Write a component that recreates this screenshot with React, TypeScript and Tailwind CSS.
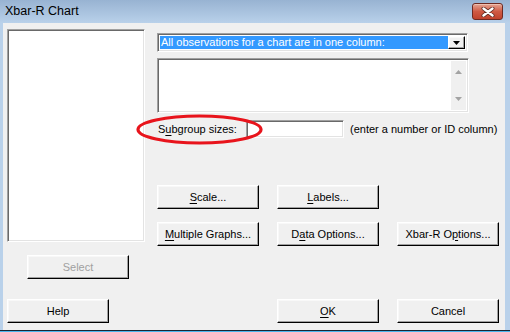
import React from "react";

const sunken =
	"border border-t-[#a0a0a0] border-l-[#a0a0a0] border-b-white border-r-white shadow-[inset_1px_1px_0_#696969,inset_-1px_-1px_0_#e3e3e3]";
const raised =
	"border border-t-white border-l-white border-b-black border-r-black shadow-[inset_-1px_-1px_0_#a0a0a0,inset_1px_1px_0_#f8f8f8] bg-[#f0f0f0]";

function Btn({
	children,
	disabled,
	className = "",
}: {
	children: React.ReactNode;
	disabled?: boolean;
	className?: string;
}) {
	return (
		<div
			className={`${raised} flex h-[24px] w-[102px] items-center justify-center text-[11px] ${
				disabled ? "text-[#a0a0a0]" : "text-black"
			} ${className}`}
		>
			{children}
		</div>
	);
}

function U({ children }: { children: React.ReactNode }) {
	return <span className="underline underline-offset-2">{children}</span>;
}

function Triangle({ up, color }: { up?: boolean; color: string }) {
	return (
		<svg width="7" height="4" viewBox="0 0 7 4">
			<path d={up ? "M0 4 L3.5 0 L7 4 Z" : "M0 0 L7 0 L3.5 4 Z"} fill={color} />
		</svg>
	);
}

export default function App() {
	return (
		<div className="relative flex h-[332px] w-[510px] flex-col overflow-hidden bg-[#b9d1ea] font-['Liberation_Sans',Arial,sans-serif]">
			{/* Title bar */}
			<div className="flex h-[23px] items-center justify-between bg-linear-to-b from-[#98b3d2] to-[#b9d1ea] pr-[7px] pl-[5px]">
				<span className="text-[12.5px] text-black">Xbar-R Chart</span>
				<div className="flex h-[17px] w-[31px] items-center justify-center rounded-[3px] border border-[#6e2a22] bg-linear-to-b from-[#e4a494] via-[#cf5a44] to-[#c0422c] shadow-[inset_0_1px_0_#f0c0b0]">
					<svg width="14" height="10" viewBox="0 0 14 10">
						<path
							d="M2.5 1.5 L11.5 8.5 M11.5 1.5 L2.5 8.5"
							stroke="#5a2820"
							strokeWidth="4"
							strokeLinecap="round"
						/>
						<path
							d="M2.5 1.5 L11.5 8.5 M11.5 1.5 L2.5 8.5"
							stroke="#ffffff"
							strokeWidth="2.4"
							strokeLinecap="round"
						/>
					</svg>
				</div>
			</div>

			{/* Client area */}
			<div className="mr-[5px] ml-[3px] flex h-[307px] bg-[#f0f0f0]">
				{/* Left column */}
				<div className="ml-[4px] flex w-[138px] flex-col pt-[6px] pb-[7px]">
					<div className={`${sunken} h-[213px] bg-white`} />
					<Btn disabled className="mt-[13px] ml-[20px] h-[23px] w-[101px]">
						Select
					</Btn>
					<Btn className="mt-auto w-[101px]">Help</Btn>
				</div>

				{/* Right column */}
				<div className="ml-[12px] flex w-[345px] flex-col pt-[10px] pb-[7px]">
					{/* Dropdown */}
					<div className={`${sunken} flex h-[19px] w-[311px] bg-white p-[2px]`}>
						<div className="flex flex-1 items-center bg-[#3399ff] pl-[1px] text-[11px] text-white">
							All observations for a chart are in one column:
						</div>
						<div className={`${raised} flex w-[17px] items-center justify-center`}>
							<Triangle color="#000" />
						</div>
					</div>

					{/* Text area with scrollbar */}
					<div className={`${sunken} mt-[6px] flex h-[55px] w-[312px] bg-white p-[2px]`}>
						<div className="flex-1" />
						<div className="flex w-[15px] flex-col items-center justify-between bg-[#f0f0f0] py-[9px]">
							<Triangle up color="#a3a3a3" />
							<Triangle color="#a3a3a3" />
						</div>
					</div>

					{/* Subgroup sizes */}
					<div className="mt-[7px] flex h-[18px] items-center text-[11px] text-black">
						<span className="w-[89px] pl-[1px]">
							S<U>u</U>bgroup sizes:
						</span>
						<div className={`${sunken} h-[18px] w-[98px] bg-white`} />
						<span className="ml-[6px]">(enter a number or ID column)</span>
					</div>

					{/* Option buttons */}
					<div className="mt-[47px] flex gap-x-[18px]">
						<Btn className="h-[23px]">
							<U>S</U>cale...
						</Btn>
						<Btn className="h-[23px]">
							<U>L</U>abels...
						</Btn>
					</div>
					<div className="mt-[13px] flex gap-x-[18px]">
						<Btn>
							<U>M</U>ultiple Graphs...
						</Btn>
						<Btn>
							D<U>a</U>ta Options...
						</Btn>
						<Btn>
							Xbar-R O<U>p</U>tions...
						</Btn>
					</div>

					{/* OK / Cancel */}
					<div className="mt-auto flex gap-x-[18px] pl-[120px]">
						<Btn>
							<U>O</U>K
						</Btn>
						<Btn>Cancel</Btn>
					</div>
				</div>
			</div>

			<div className="h-[1px] bg-[#1b2633]" />
			<div className="h-[1px] bg-[#4cb6ec]" />

			{/* Red annotation ellipse */}
			<svg
				className="pointer-events-none absolute top-[114px] left-[136px]"
				width="127"
				height="31"
				viewBox="0 0 127 31"
			>
				<ellipse cx="63.5" cy="15.5" rx="61.5" ry="13.5" fill="none" stroke="#e8141c" strokeWidth="3.2" />
			</svg>
		</div>
	);
}
